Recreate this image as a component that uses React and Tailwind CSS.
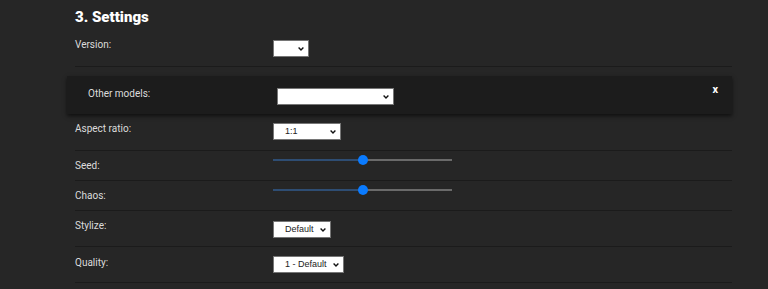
import React from "react";

const Label = ({ children, className = "" }) => (
  <div className={`w-[198px] shrink-0 text-[10px] leading-[14px] text-[#dcdcdc] ${className}`}>{children}</div>
);

// native select with its own little chevron
const Select = ({ w, h = "h-[17px]", value, options = [], className = "" }) => (
  <div className={`relative shrink-0 ${w} ${h} ${className}`}>
    <select
      defaultValue={value}
      className={`block appearance-none w-full h-full bg-white text-[#222] border border-[#767676] text-[9px] leading-[13px] pl-[11px] pr-[14px] font-['Liberation_Sans',Arial,sans-serif]`}
    >
      {options.map((o) => (
        <option key={o}>{o}</option>
      ))}
    </select>
    <svg
      className="pointer-events-none absolute right-[5px] top-1/2 -translate-y-1/2"
      width="6"
      height="4"
      viewBox="0 0 6 4"
    >
      <path d="M0.6 0.6 L3 3 L5.4 0.6" fill="none" stroke="#111" strokeWidth="1.4" />
    </svg>
  </div>
);

// slider drawn by hand, value in percent
const Slider = ({ value = 50 }) => (
  <div className="relative w-[179px] h-[10px] flex items-center">
    <div className="absolute left-0 right-0 h-[2px] bg-[#6a6a6a]" />
    <div className="absolute left-0 h-[2px] bg-[#2e4d73]" style={{ width: `${value}%` }} />
    <div
      className="absolute w-[10px] h-[10px] rounded-full bg-[#0a7bff] -translate-x-1/2"
      style={{ left: `${value}%` }}
    />
  </div>
);

const App = () => {
  return (
    <div className="min-h-screen w-full bg-[#262626] font-['Roboto',sans-serif] overflow-hidden">
      <div className="ml-[75px] w-[657px]">
        <h2 className="pt-[7px] text-[15px] leading-[20px] font-black text-white">3. Settings</h2>

        {/* version */}
        <div className="flex h-[37px] mt-[3px] border-b border-[#1b1b1b]">
          <Label className="mt-[8px]">Version:</Label>
          <Select w="w-[36px]" className="mt-[10px]" options={[""]} />
        </div>

        {/* other models panel */}
        <div className="-ml-[8px] mt-[9px] h-[38px] flex bg-[#1c1c1c] shadow-[0_2px_4px_rgba(0,0,0,0.6)] pl-[21px] pr-[14px]">
          <div className="w-[189px] shrink-0 mt-[11px] text-[10px] leading-[14px] text-[#dcdcdc]">Other models:</div>
          <Select w="w-[117px]" className="mt-[12px]" options={[""]} />
          <div className="ml-auto mt-[6px] text-[11px] font-bold text-white">x</div>
        </div>

        {/* aspect ratio */}
        <div className="flex h-[37px] border-b border-[#1b1b1b]">
          <Label className="mt-[8px]">Aspect ratio:</Label>
          <Select w="w-[68px]" className="mt-[9px]" value="1:1" options={["1:1", "4:3", "16:9"]} />
        </div>

        {/* seed */}
        <div className="flex h-[30px] border-b border-[#1b1b1b]">
          <Label className="mt-[8px]">Seed:</Label>
          <div className="mt-[4px]">
            <Slider value={50} />
          </div>
        </div>

        {/* chaos */}
        <div className="flex h-[30px] border-b border-[#1b1b1b]">
          <Label className="mt-[8px]">Chaos:</Label>
          <div className="mt-[4px]">
            <Slider value={50} />
          </div>
        </div>

        {/* stylize */}
        <div className="flex h-[36px] border-b border-[#1b1b1b]">
          <Label className="mt-[8px]">Stylize:</Label>
          <Select w="w-[58px]" className="mt-[10px]" value="Default" options={["Default", "Low", "High"]} />
        </div>

        {/* quality */}
        <div className="flex h-[36px] border-b border-[#1b1b1b]">
          <Label className="mt-[9px]">Quality:</Label>
          <Select w="w-[71px]" className="mt-[9px]" value="1 - Default" options={["1 - Default", "2", ".5"]} />
        </div>
      </div>
    </div>
  );
};

export default App;
